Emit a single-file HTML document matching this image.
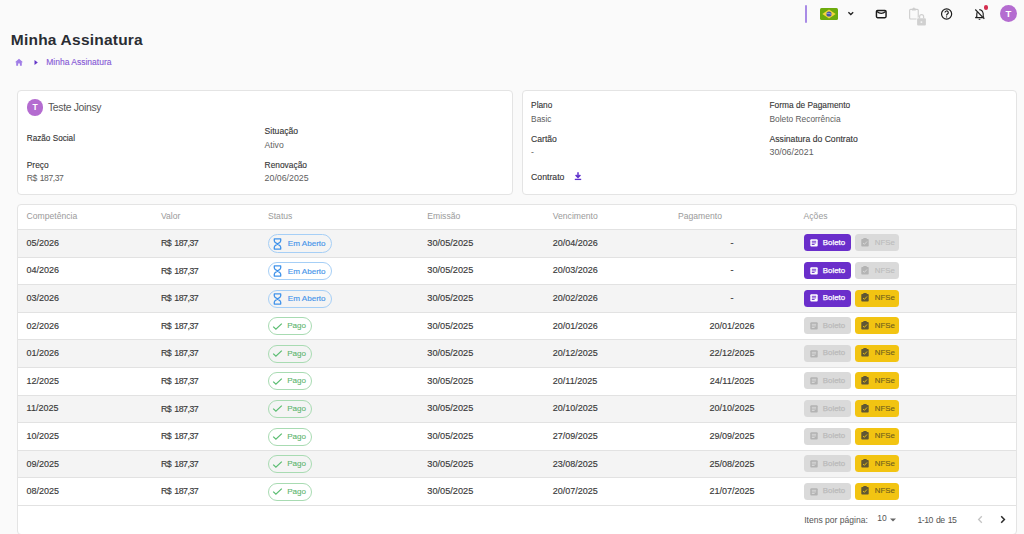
<!DOCTYPE html>
<html><head><meta charset="utf-8"><style>
html,body{margin:0;padding:0;width:1024px;height:534px;overflow:hidden;background:#fafafa;}
body{position:relative;font-family:"Liberation Sans", sans-serif;}
.t{position:absolute;white-space:nowrap;line-height:1;}
.b{position:absolute;}
</style></head><body>
<div class="b" style="left:805px;top:5px;width:2px;height:18px;background:#a98be6;border-radius:1px"></div>
<svg class="b" style="left:820px;top:8px" width="18" height="12" viewBox="0 0 18 12">
<rect x="0" y="0" width="18" height="12" rx="1.5" fill="#6dab0c"/>
<path d="M2.3 6 L9 1.6 L15.7 6 L9 10.4 Z" fill="#f3d53a"/>
<circle cx="9" cy="6" r="2.6" fill="#4457a8"/>
<path d="M6.6 5.4 Q9 4.9 11.4 6.3" stroke="#e8e8f0" stroke-width="0.5" fill="none"/>
</svg>
<svg class="b" style="left:846px;top:10px" width="10" height="8" viewBox="0 0 10 8">
<path d="M2.4 2.3 L4.8 4.5 L7.2 2.3" stroke="#222" stroke-width="1.35" fill="none"/>
</svg>
<svg class="b" style="left:874px;top:8px" width="14" height="12" viewBox="0 0 14 12">
<rect x="2.45" y="2.5" width="9.6" height="7.2" rx="1.1" stroke="#1c1c1c" stroke-width="1.45" fill="none"/>
<path d="M2.9 3.5 Q7.25 7.2 11.6 3.5" stroke="#1c1c1c" stroke-width="1.25" fill="none"/>
</svg>
<svg class="b" style="left:907px;top:6px" width="22" height="21" viewBox="0 0 22 21">
<rect x="2.65" y="3.35" width="8.6" height="9.6" rx="1" stroke="#cdcdcd" stroke-width="1.1" fill="none"/>
<rect x="4.9" y="2.5" width="4" height="2.1" rx="0.6" fill="#cdcdcd"/>
<circle cx="6.9" cy="2.3" r="0.9" fill="#cdcdcd"/>
<rect x="9.4" y="11.6" width="10.2" height="8.7" rx="1.5" fill="#fafafa"/>
<path d="M12.6 12.3 V10.5 A2 2 0 0 1 16.6 10.5 V12.3" stroke="#d0d0d0" stroke-width="1.25" fill="none"/>
<rect x="10.1" y="12.3" width="8.8" height="7.3" rx="1" fill="#d0d0d0"/>
<circle cx="14.4" cy="16.1" r="0.95" fill="#f6f6f6"/>
</svg>
<svg class="b" style="left:939px;top:7px" width="15" height="15" viewBox="0 0 15 15">
<circle cx="7.6" cy="7" r="5.05" stroke="#1c1c1c" stroke-width="1.2" fill="none"/>
<path d="M6.0 5.6 A1.65 1.65 0 1 1 8.3 7.1 Q7.6 7.5 7.6 8.4" stroke="#1c1c1c" stroke-width="1.15" fill="none"/>
<circle cx="7.6" cy="9.9" r="0.65" fill="#1c1c1c"/>
</svg>
<svg class="b" style="left:973px;top:8px" width="14" height="14" viewBox="0 0 14 14">
<path d="M6.3 1.6 Q9.6 2 10.2 5.6 V8.6 L11 9.6" stroke="#1c1c1c" stroke-width="1.1" fill="none"/>
<path d="M4.3 4.0 Q3.8 5 3.8 6 V8.6 L2.6 9.6 H9.8" stroke="#1c1c1c" stroke-width="1.15" fill="none" stroke-linejoin="round"/>
<path d="M5.7 11.3 H7.3" stroke="#1c1c1c" stroke-width="1"/>
<path d="M2.3 1.5 L11.3 10.9" stroke="#1c1c1c" stroke-width="1.1"/>
</svg>
<div class="b" style="left:983.9px;top:5.2px;width:4.4px;height:4.4px;background:#d42f4f;border-radius:50%"></div>
<div class="b" style="left:1000px;top:4.8px;width:17px;height:17px;background:#b46cd0;border-radius:50%"></div>
<div class="t" style="left:908.50px;width:200px;text-align:center;top:8.56px;font-size:9.5px;color:#fff;font-weight:700;letter-spacing:0px;">T</div>
<div class="t" style="left:10.80px;top:32.38px;font-size:15.5px;color:#2a2d33;font-weight:700;letter-spacing:0.22px;">Minha Assinatura</div>
<svg class="b" style="left:13.5px;top:57px" width="10" height="10" viewBox="0 0 10 10">
<path d="M5 1.8 L9 5.2 H7.8 V8.7 H5.9 V6.5 H4.1 V8.7 H2.2 V5.2 H1 Z" fill="#a07de6"/>
</svg>
<svg class="b" style="left:33px;top:59px" width="6" height="7" viewBox="0 0 6 7">
<path d="M1.5 1 L4.8 3.5 L1.5 6 Z" fill="#6436c8"/>
</svg>
<div class="t" style="left:46.25px;top:58.10px;font-size:8.5px;color:#8658d6;font-weight:400;letter-spacing:0px;-webkit-text-stroke:0.12px #8658d6">Minha Assinatura</div>
<div class="b" style="left:17px;top:90px;width:496px;height:105px;background:#fff;border:1px solid #e4e4e4;border-radius:4px;box-sizing:border-box"></div>
<div class="b" style="left:522px;top:90px;width:495px;height:105px;background:#fff;border:1px solid #e4e4e4;border-radius:4px;box-sizing:border-box"></div>
<div class="b" style="left:26.75px;top:99.25px;width:16.5px;height:16.5px;background:#b46cd0;border-radius:50%"></div>
<div class="t" style="left:-65.00px;width:200px;text-align:center;top:103.30px;font-size:8.5px;color:#fff;font-weight:700;letter-spacing:0px;">T</div>
<div class="t" style="left:48.00px;top:103.40px;font-size:10.4px;color:#555;font-weight:400;letter-spacing:-0.33px;">Teste Joinsy</div>
<div class="t" style="left:26.75px;top:135.16px;font-size:8.2px;color:#363636;font-weight:400;letter-spacing:0px;-webkit-text-stroke:0.12px #363636">Razão Social</div>
<div class="t" style="left:26.75px;top:160.89px;font-size:8.4px;color:#363636;font-weight:400;letter-spacing:0px;-webkit-text-stroke:0.12px #363636">Preço</div>
<div class="t" style="left:26.75px;top:173.97px;font-size:8.6px;color:#5e5e5e;font-weight:400;letter-spacing:-0.45px;word-spacing:1px">R$ 187,37</div>
<div class="t" style="left:264.60px;top:126.92px;font-size:8.6px;color:#363636;font-weight:400;letter-spacing:0px;-webkit-text-stroke:0.12px #363636">Situação</div>
<div class="t" style="left:264.60px;top:140.62px;font-size:8.6px;color:#5e5e5e;font-weight:400;letter-spacing:0px;">Ativo</div>
<div class="t" style="left:264.60px;top:161.29px;font-size:8.4px;color:#363636;font-weight:400;letter-spacing:0px;-webkit-text-stroke:0.12px #363636">Renovação</div>
<div class="t" style="left:264.60px;top:174.05px;font-size:8.8px;color:#5e5e5e;font-weight:400;letter-spacing:0px;">20/06/2025</div>
<div class="t" style="left:531.10px;top:101.17px;font-size:8.3px;color:#363636;font-weight:400;letter-spacing:0px;-webkit-text-stroke:0.12px #363636">Plano</div>
<div class="t" style="left:531.10px;top:114.87px;font-size:8.3px;color:#5e5e5e;font-weight:400;letter-spacing:0px;">Basic</div>
<div class="t" style="left:531.10px;top:135.22px;font-size:8.6px;color:#363636;font-weight:400;letter-spacing:0px;-webkit-text-stroke:0.12px #363636">Cartão</div>
<div class="t" style="left:531.10px;top:148.22px;font-size:8.6px;color:#5e5e5e;font-weight:400;letter-spacing:0px;">-</div>
<div class="t" style="left:531.10px;top:172.64px;font-size:8.7px;color:#363636;font-weight:400;letter-spacing:0px;-webkit-text-stroke:0.12px #363636">Contrato</div>
<svg class="b" style="left:573px;top:171px" width="10" height="10" viewBox="0 0 10 10">
<path d="M5 1.2 V6.2 M2.6 4 L5 6.4 L7.4 4" stroke="#5e2fcc" stroke-width="1.5" fill="none"/>
<path d="M1.8 8.4 H8.2" stroke="#5e2fcc" stroke-width="1.3"/>
</svg>
<div class="t" style="left:769.50px;top:101.13px;font-size:8.35px;color:#363636;font-weight:400;letter-spacing:0px;-webkit-text-stroke:0.12px #363636">Forma de Pagamento</div>
<div class="t" style="left:769.50px;top:114.51px;font-size:8.37px;color:#5e5e5e;font-weight:400;letter-spacing:0px;">Boleto Recorrência</div>
<div class="t" style="left:769.50px;top:134.88px;font-size:8.65px;color:#363636;font-weight:400;letter-spacing:0px;-webkit-text-stroke:0.12px #363636">Assinatura do Contrato</div>
<div class="t" style="left:769.50px;top:148.45px;font-size:8.8px;color:#5e5e5e;font-weight:400;letter-spacing:0px;">30/06/2021</div>
<div class="b" style="left:17px;top:204px;width:1000px;height:331px;background:#fff;border:1px solid #e4e4e4;border-radius:4px;box-sizing:border-box;overflow:hidden"></div>
<div class="t" style="left:26.60px;top:211.92px;font-size:8.6px;color:#9a9a9a;font-weight:400;letter-spacing:0px;">Competência</div>
<div class="t" style="left:161.00px;top:211.92px;font-size:8.6px;color:#9a9a9a;font-weight:400;letter-spacing:0px;">Valor</div>
<div class="t" style="left:268.00px;top:211.92px;font-size:8.6px;color:#9a9a9a;font-weight:400;letter-spacing:0px;">Status</div>
<div class="t" style="left:427.30px;top:211.92px;font-size:8.6px;color:#9a9a9a;font-weight:400;letter-spacing:0px;">Emissão</div>
<div class="t" style="left:552.80px;top:211.92px;font-size:8.6px;color:#9a9a9a;font-weight:400;letter-spacing:0px;">Vencimento</div>
<div class="t" style="left:678.00px;top:211.92px;font-size:8.6px;color:#9a9a9a;font-weight:400;letter-spacing:0px;">Pagamento</div>
<div class="t" style="left:803.60px;top:211.92px;font-size:8.6px;color:#9a9a9a;font-weight:400;letter-spacing:0px;">Ações</div>
<div class="b" style="left:18px;top:229px;width:998px;height:1px;background:#e2e2e2"></div>
<div class="b" style="left:18px;top:230px;width:998px;height:27px;background:#f4f4f4"></div>
<div class="b" style="left:18px;top:257px;width:998px;height:1px;background:#e2e2e2"></div>
<div class="t" style="left:26.60px;top:238.88px;font-size:9px;color:#3a3a3a;font-weight:400;letter-spacing:0px;-webkit-text-stroke:0.15px #3a3a3a">05/2026</div>
<div class="t" style="left:161.00px;top:239.05px;font-size:8.8px;color:#3a3a3a;font-weight:400;letter-spacing:-0.48px;-webkit-text-stroke:0.15px #3a3a3a;word-spacing:1px">R$ 187,37</div>
<div class="t" style="left:427.30px;top:238.71px;font-size:9.2px;color:#3a3a3a;font-weight:400;letter-spacing:0px;-webkit-text-stroke:0.15px #3a3a3a">30/05/2025</div>
<div class="t" style="left:552.80px;top:238.88px;font-size:9px;color:#3a3a3a;font-weight:400;letter-spacing:0px;-webkit-text-stroke:0.15px #3a3a3a">20/04/2026</div>
<div class="t" style="left:632.00px;width:200px;text-align:center;top:238.88px;font-size:9px;color:#3a3a3a;font-weight:400;letter-spacing:0px;-webkit-text-stroke:0.15px #3a3a3a">-</div>
<div class="b" style="left:268px;top:234.3px;width:64px;height:18.4px;border:1.2px solid #a6cff6;border-radius:10px;box-sizing:border-box"></div>
<svg class="b" style="left:273px;top:237.80px" width="9" height="12" viewBox="0 0 9 12">
<path d="M1.3 0.9 H7.7 V2.9 Q7.7 4.3 4.5 5.9 Q1.3 4.3 1.3 2.9 Z M1.3 11.1 H7.7 V9.1 Q7.7 7.7 4.5 6.1 Q1.3 7.7 1.3 9.1 Z" stroke="#3f92ea" stroke-width="1.3" fill="none" stroke-linejoin="round"/>
</svg>
<div class="t" style="left:287.80px;top:240.04px;font-size:8.1px;color:#4795ea;font-weight:400;letter-spacing:0px;-webkit-text-stroke:0.15px #4795ea">Em Aberto</div>
<div class="b" style="left:803.6px;top:234.3px;width:47px;height:17px;background:#6a2ecb;border-radius:3.5px"></div>
<svg class="b" style="left:809.5px;top:239.20px" width="8" height="8" viewBox="0 0 8 8">
<rect x="0.3" y="0.3" width="7.4" height="7.2" rx="1" fill="#ffffff"/>
<path d="M1.8 2.3 H6.2 M1.8 3.9 H6.2 M1.8 5.5 H4.6" stroke="#6a2ecb" stroke-width="0.9"/>
</svg>
<div class="t" style="left:822.80px;top:238.91px;font-size:7.9px;color:#ffffff;font-weight:400;letter-spacing:0px;-webkit-text-stroke:0.25px #ffffff">Boleto</div>
<div class="b" style="left:855px;top:234.3px;width:44px;height:17px;background:#dadada;border-radius:3.5px"></div>
<svg class="b" style="left:860.6px;top:238.00px" width="8" height="9" viewBox="0 0 8 9">
<rect x="0.3" y="1" width="7.4" height="7.6" rx="0.8" fill="#b3b3b3"/>
<rect x="2.3" y="0.1" width="3.4" height="1.8" rx="0.5" fill="#b3b3b3"/>
<path d="M2 5 L3.4 6.3 L6 3.5" stroke="#dadada" stroke-width="0.9" fill="none"/>
</svg>
<div class="t" style="left:874.80px;top:239.00px;font-size:7.8px;color:#bcbcbc;font-weight:400;letter-spacing:0px;-webkit-text-stroke:0.15px #bcbcbc">NFSe</div>
<div class="b" style="left:18px;top:284px;width:998px;height:1px;background:#e2e2e2"></div>
<div class="t" style="left:26.60px;top:266.48px;font-size:9px;color:#3a3a3a;font-weight:400;letter-spacing:0px;-webkit-text-stroke:0.15px #3a3a3a">04/2026</div>
<div class="t" style="left:161.00px;top:266.65px;font-size:8.8px;color:#3a3a3a;font-weight:400;letter-spacing:-0.48px;-webkit-text-stroke:0.15px #3a3a3a;word-spacing:1px">R$ 187,37</div>
<div class="t" style="left:427.30px;top:266.31px;font-size:9.2px;color:#3a3a3a;font-weight:400;letter-spacing:0px;-webkit-text-stroke:0.15px #3a3a3a">30/05/2025</div>
<div class="t" style="left:552.80px;top:266.48px;font-size:9px;color:#3a3a3a;font-weight:400;letter-spacing:0px;-webkit-text-stroke:0.15px #3a3a3a">20/03/2026</div>
<div class="t" style="left:632.00px;width:200px;text-align:center;top:266.48px;font-size:9px;color:#3a3a3a;font-weight:400;letter-spacing:0px;-webkit-text-stroke:0.15px #3a3a3a">-</div>
<div class="b" style="left:268px;top:261.90000000000003px;width:64px;height:18.4px;border:1.2px solid #a6cff6;border-radius:10px;box-sizing:border-box"></div>
<svg class="b" style="left:273px;top:265.40px" width="9" height="12" viewBox="0 0 9 12">
<path d="M1.3 0.9 H7.7 V2.9 Q7.7 4.3 4.5 5.9 Q1.3 4.3 1.3 2.9 Z M1.3 11.1 H7.7 V9.1 Q7.7 7.7 4.5 6.1 Q1.3 7.7 1.3 9.1 Z" stroke="#3f92ea" stroke-width="1.3" fill="none" stroke-linejoin="round"/>
</svg>
<div class="t" style="left:287.80px;top:267.64px;font-size:8.1px;color:#4795ea;font-weight:400;letter-spacing:0px;-webkit-text-stroke:0.15px #4795ea">Em Aberto</div>
<div class="b" style="left:803.6px;top:261.90000000000003px;width:47px;height:17px;background:#6a2ecb;border-radius:3.5px"></div>
<svg class="b" style="left:809.5px;top:266.80px" width="8" height="8" viewBox="0 0 8 8">
<rect x="0.3" y="0.3" width="7.4" height="7.2" rx="1" fill="#ffffff"/>
<path d="M1.8 2.3 H6.2 M1.8 3.9 H6.2 M1.8 5.5 H4.6" stroke="#6a2ecb" stroke-width="0.9"/>
</svg>
<div class="t" style="left:822.80px;top:266.51px;font-size:7.9px;color:#ffffff;font-weight:400;letter-spacing:0px;-webkit-text-stroke:0.25px #ffffff">Boleto</div>
<div class="b" style="left:855px;top:261.90000000000003px;width:44px;height:17px;background:#dadada;border-radius:3.5px"></div>
<svg class="b" style="left:860.6px;top:265.60px" width="8" height="9" viewBox="0 0 8 9">
<rect x="0.3" y="1" width="7.4" height="7.6" rx="0.8" fill="#b3b3b3"/>
<rect x="2.3" y="0.1" width="3.4" height="1.8" rx="0.5" fill="#b3b3b3"/>
<path d="M2 5 L3.4 6.3 L6 3.5" stroke="#dadada" stroke-width="0.9" fill="none"/>
</svg>
<div class="t" style="left:874.80px;top:266.60px;font-size:7.8px;color:#bcbcbc;font-weight:400;letter-spacing:0px;-webkit-text-stroke:0.15px #bcbcbc">NFSe</div>
<div class="b" style="left:18px;top:285px;width:998px;height:27px;background:#f4f4f4"></div>
<div class="b" style="left:18px;top:312px;width:998px;height:1px;background:#e2e2e2"></div>
<div class="t" style="left:26.60px;top:294.08px;font-size:9px;color:#3a3a3a;font-weight:400;letter-spacing:0px;-webkit-text-stroke:0.15px #3a3a3a">03/2026</div>
<div class="t" style="left:161.00px;top:294.25px;font-size:8.8px;color:#3a3a3a;font-weight:400;letter-spacing:-0.48px;-webkit-text-stroke:0.15px #3a3a3a;word-spacing:1px">R$ 187,37</div>
<div class="t" style="left:427.30px;top:293.91px;font-size:9.2px;color:#3a3a3a;font-weight:400;letter-spacing:0px;-webkit-text-stroke:0.15px #3a3a3a">30/05/2025</div>
<div class="t" style="left:552.80px;top:294.08px;font-size:9px;color:#3a3a3a;font-weight:400;letter-spacing:0px;-webkit-text-stroke:0.15px #3a3a3a">20/02/2026</div>
<div class="t" style="left:632.00px;width:200px;text-align:center;top:294.08px;font-size:9px;color:#3a3a3a;font-weight:400;letter-spacing:0px;-webkit-text-stroke:0.15px #3a3a3a">-</div>
<div class="b" style="left:268px;top:289.5px;width:64px;height:18.4px;border:1.2px solid #a6cff6;border-radius:10px;box-sizing:border-box"></div>
<svg class="b" style="left:273px;top:293.00px" width="9" height="12" viewBox="0 0 9 12">
<path d="M1.3 0.9 H7.7 V2.9 Q7.7 4.3 4.5 5.9 Q1.3 4.3 1.3 2.9 Z M1.3 11.1 H7.7 V9.1 Q7.7 7.7 4.5 6.1 Q1.3 7.7 1.3 9.1 Z" stroke="#3f92ea" stroke-width="1.3" fill="none" stroke-linejoin="round"/>
</svg>
<div class="t" style="left:287.80px;top:295.24px;font-size:8.1px;color:#4795ea;font-weight:400;letter-spacing:0px;-webkit-text-stroke:0.15px #4795ea">Em Aberto</div>
<div class="b" style="left:803.6px;top:289.5px;width:47px;height:17px;background:#6a2ecb;border-radius:3.5px"></div>
<svg class="b" style="left:809.5px;top:294.40px" width="8" height="8" viewBox="0 0 8 8">
<rect x="0.3" y="0.3" width="7.4" height="7.2" rx="1" fill="#ffffff"/>
<path d="M1.8 2.3 H6.2 M1.8 3.9 H6.2 M1.8 5.5 H4.6" stroke="#6a2ecb" stroke-width="0.9"/>
</svg>
<div class="t" style="left:822.80px;top:294.11px;font-size:7.9px;color:#ffffff;font-weight:400;letter-spacing:0px;-webkit-text-stroke:0.25px #ffffff">Boleto</div>
<div class="b" style="left:855px;top:289.5px;width:44px;height:17px;background:#f2c412;border-radius:3.5px"></div>
<svg class="b" style="left:860.6px;top:293.20px" width="8" height="9" viewBox="0 0 8 9">
<rect x="0.3" y="1" width="7.4" height="7.6" rx="0.8" fill="#5f5634"/>
<rect x="2.3" y="0.1" width="3.4" height="1.8" rx="0.5" fill="#5f5634"/>
<path d="M2 5 L3.4 6.3 L6 3.5" stroke="#f2c412" stroke-width="0.9" fill="none"/>
</svg>
<div class="t" style="left:874.80px;top:294.20px;font-size:7.8px;color:#73611f;font-weight:400;letter-spacing:0px;-webkit-text-stroke:0.15px #73611f">NFSe</div>
<div class="b" style="left:18px;top:339px;width:998px;height:1px;background:#e2e2e2"></div>
<div class="t" style="left:26.60px;top:321.68px;font-size:9px;color:#3a3a3a;font-weight:400;letter-spacing:0px;-webkit-text-stroke:0.15px #3a3a3a">02/2026</div>
<div class="t" style="left:161.00px;top:321.85px;font-size:8.8px;color:#3a3a3a;font-weight:400;letter-spacing:-0.48px;-webkit-text-stroke:0.15px #3a3a3a;word-spacing:1px">R$ 187,37</div>
<div class="t" style="left:427.30px;top:321.51px;font-size:9.2px;color:#3a3a3a;font-weight:400;letter-spacing:0px;-webkit-text-stroke:0.15px #3a3a3a">30/05/2025</div>
<div class="t" style="left:552.80px;top:321.68px;font-size:9px;color:#3a3a3a;font-weight:400;letter-spacing:0px;-webkit-text-stroke:0.15px #3a3a3a">20/01/2026</div>
<div class="t" style="left:632.00px;width:200px;text-align:center;top:321.68px;font-size:9px;color:#3a3a3a;font-weight:400;letter-spacing:0px;-webkit-text-stroke:0.15px #3a3a3a">20/01/2026</div>
<div class="b" style="left:268px;top:317.1px;width:44px;height:18px;border:1.2px solid #a8dbb2;border-radius:10px;box-sizing:border-box"></div>
<svg class="b" style="left:272px;top:322.50px" width="11" height="9" viewBox="0 0 11 9">
<path d="M1.2 3.6 L3.9 6.2 L9.8 0.6" stroke="#5bbd72" stroke-width="1.25" fill="none"/>
</svg>
<div class="t" style="left:287.20px;top:322.14px;font-size:8.1px;color:#5db56e;font-weight:400;letter-spacing:0px;-webkit-text-stroke:0.1px #5db56e">Pago</div>
<div class="b" style="left:803.6px;top:317.1px;width:47px;height:17px;background:#dadada;border-radius:3.5px"></div>
<svg class="b" style="left:809.5px;top:322.00px" width="8" height="8" viewBox="0 0 8 8">
<rect x="0.3" y="0.3" width="7.4" height="7.2" rx="1" fill="#b3b3b3"/>
<path d="M1.8 2.3 H6.2 M1.8 3.9 H6.2 M1.8 5.5 H4.6" stroke="#dadada" stroke-width="0.9"/>
</svg>
<div class="t" style="left:822.80px;top:321.71px;font-size:7.9px;color:#bbbbbb;font-weight:400;letter-spacing:0px;-webkit-text-stroke:0.25px #bbbbbb">Boleto</div>
<div class="b" style="left:855px;top:317.1px;width:44px;height:17px;background:#f2c412;border-radius:3.5px"></div>
<svg class="b" style="left:860.6px;top:320.80px" width="8" height="9" viewBox="0 0 8 9">
<rect x="0.3" y="1" width="7.4" height="7.6" rx="0.8" fill="#5f5634"/>
<rect x="2.3" y="0.1" width="3.4" height="1.8" rx="0.5" fill="#5f5634"/>
<path d="M2 5 L3.4 6.3 L6 3.5" stroke="#f2c412" stroke-width="0.9" fill="none"/>
</svg>
<div class="t" style="left:874.80px;top:321.80px;font-size:7.8px;color:#73611f;font-weight:400;letter-spacing:0px;-webkit-text-stroke:0.15px #73611f">NFSe</div>
<div class="b" style="left:18px;top:340px;width:998px;height:27px;background:#f4f4f4"></div>
<div class="b" style="left:18px;top:367px;width:998px;height:1px;background:#e2e2e2"></div>
<div class="t" style="left:26.60px;top:349.28px;font-size:9px;color:#3a3a3a;font-weight:400;letter-spacing:0px;-webkit-text-stroke:0.15px #3a3a3a">01/2026</div>
<div class="t" style="left:161.00px;top:349.45px;font-size:8.8px;color:#3a3a3a;font-weight:400;letter-spacing:-0.48px;-webkit-text-stroke:0.15px #3a3a3a;word-spacing:1px">R$ 187,37</div>
<div class="t" style="left:427.30px;top:349.11px;font-size:9.2px;color:#3a3a3a;font-weight:400;letter-spacing:0px;-webkit-text-stroke:0.15px #3a3a3a">30/05/2025</div>
<div class="t" style="left:552.80px;top:349.28px;font-size:9px;color:#3a3a3a;font-weight:400;letter-spacing:0px;-webkit-text-stroke:0.15px #3a3a3a">20/12/2025</div>
<div class="t" style="left:632.00px;width:200px;text-align:center;top:349.28px;font-size:9px;color:#3a3a3a;font-weight:400;letter-spacing:0px;-webkit-text-stroke:0.15px #3a3a3a">22/12/2025</div>
<div class="b" style="left:268px;top:344.7px;width:44px;height:18px;border:1.2px solid #a8dbb2;border-radius:10px;box-sizing:border-box"></div>
<svg class="b" style="left:272px;top:350.10px" width="11" height="9" viewBox="0 0 11 9">
<path d="M1.2 3.6 L3.9 6.2 L9.8 0.6" stroke="#5bbd72" stroke-width="1.25" fill="none"/>
</svg>
<div class="t" style="left:287.20px;top:349.74px;font-size:8.1px;color:#5db56e;font-weight:400;letter-spacing:0px;-webkit-text-stroke:0.1px #5db56e">Pago</div>
<div class="b" style="left:803.6px;top:344.7px;width:47px;height:17px;background:#dadada;border-radius:3.5px"></div>
<svg class="b" style="left:809.5px;top:349.60px" width="8" height="8" viewBox="0 0 8 8">
<rect x="0.3" y="0.3" width="7.4" height="7.2" rx="1" fill="#b3b3b3"/>
<path d="M1.8 2.3 H6.2 M1.8 3.9 H6.2 M1.8 5.5 H4.6" stroke="#dadada" stroke-width="0.9"/>
</svg>
<div class="t" style="left:822.80px;top:349.31px;font-size:7.9px;color:#bbbbbb;font-weight:400;letter-spacing:0px;-webkit-text-stroke:0.25px #bbbbbb">Boleto</div>
<div class="b" style="left:855px;top:344.7px;width:44px;height:17px;background:#f2c412;border-radius:3.5px"></div>
<svg class="b" style="left:860.6px;top:348.40px" width="8" height="9" viewBox="0 0 8 9">
<rect x="0.3" y="1" width="7.4" height="7.6" rx="0.8" fill="#5f5634"/>
<rect x="2.3" y="0.1" width="3.4" height="1.8" rx="0.5" fill="#5f5634"/>
<path d="M2 5 L3.4 6.3 L6 3.5" stroke="#f2c412" stroke-width="0.9" fill="none"/>
</svg>
<div class="t" style="left:874.80px;top:349.40px;font-size:7.8px;color:#73611f;font-weight:400;letter-spacing:0px;-webkit-text-stroke:0.15px #73611f">NFSe</div>
<div class="b" style="left:18px;top:395px;width:998px;height:1px;background:#e2e2e2"></div>
<div class="t" style="left:26.60px;top:376.88px;font-size:9px;color:#3a3a3a;font-weight:400;letter-spacing:0px;-webkit-text-stroke:0.15px #3a3a3a">12/2025</div>
<div class="t" style="left:161.00px;top:377.05px;font-size:8.8px;color:#3a3a3a;font-weight:400;letter-spacing:-0.48px;-webkit-text-stroke:0.15px #3a3a3a;word-spacing:1px">R$ 187,37</div>
<div class="t" style="left:427.30px;top:376.71px;font-size:9.2px;color:#3a3a3a;font-weight:400;letter-spacing:0px;-webkit-text-stroke:0.15px #3a3a3a">30/05/2025</div>
<div class="t" style="left:552.80px;top:376.88px;font-size:9px;color:#3a3a3a;font-weight:400;letter-spacing:0px;-webkit-text-stroke:0.15px #3a3a3a">20/11/2025</div>
<div class="t" style="left:632.00px;width:200px;text-align:center;top:376.88px;font-size:9px;color:#3a3a3a;font-weight:400;letter-spacing:0px;-webkit-text-stroke:0.15px #3a3a3a">24/11/2025</div>
<div class="b" style="left:268px;top:372.3px;width:44px;height:18px;border:1.2px solid #a8dbb2;border-radius:10px;box-sizing:border-box"></div>
<svg class="b" style="left:272px;top:377.70px" width="11" height="9" viewBox="0 0 11 9">
<path d="M1.2 3.6 L3.9 6.2 L9.8 0.6" stroke="#5bbd72" stroke-width="1.25" fill="none"/>
</svg>
<div class="t" style="left:287.20px;top:377.34px;font-size:8.1px;color:#5db56e;font-weight:400;letter-spacing:0px;-webkit-text-stroke:0.1px #5db56e">Pago</div>
<div class="b" style="left:803.6px;top:372.3px;width:47px;height:17px;background:#dadada;border-radius:3.5px"></div>
<svg class="b" style="left:809.5px;top:377.20px" width="8" height="8" viewBox="0 0 8 8">
<rect x="0.3" y="0.3" width="7.4" height="7.2" rx="1" fill="#b3b3b3"/>
<path d="M1.8 2.3 H6.2 M1.8 3.9 H6.2 M1.8 5.5 H4.6" stroke="#dadada" stroke-width="0.9"/>
</svg>
<div class="t" style="left:822.80px;top:376.91px;font-size:7.9px;color:#bbbbbb;font-weight:400;letter-spacing:0px;-webkit-text-stroke:0.25px #bbbbbb">Boleto</div>
<div class="b" style="left:855px;top:372.3px;width:44px;height:17px;background:#f2c412;border-radius:3.5px"></div>
<svg class="b" style="left:860.6px;top:376.00px" width="8" height="9" viewBox="0 0 8 9">
<rect x="0.3" y="1" width="7.4" height="7.6" rx="0.8" fill="#5f5634"/>
<rect x="2.3" y="0.1" width="3.4" height="1.8" rx="0.5" fill="#5f5634"/>
<path d="M2 5 L3.4 6.3 L6 3.5" stroke="#f2c412" stroke-width="0.9" fill="none"/>
</svg>
<div class="t" style="left:874.80px;top:377.00px;font-size:7.8px;color:#73611f;font-weight:400;letter-spacing:0px;-webkit-text-stroke:0.15px #73611f">NFSe</div>
<div class="b" style="left:18px;top:396px;width:998px;height:26px;background:#f4f4f4"></div>
<div class="b" style="left:18px;top:422px;width:998px;height:1px;background:#e2e2e2"></div>
<div class="t" style="left:26.60px;top:404.48px;font-size:9px;color:#3a3a3a;font-weight:400;letter-spacing:0px;-webkit-text-stroke:0.15px #3a3a3a">11/2025</div>
<div class="t" style="left:161.00px;top:404.65px;font-size:8.8px;color:#3a3a3a;font-weight:400;letter-spacing:-0.48px;-webkit-text-stroke:0.15px #3a3a3a;word-spacing:1px">R$ 187,37</div>
<div class="t" style="left:427.30px;top:404.31px;font-size:9.2px;color:#3a3a3a;font-weight:400;letter-spacing:0px;-webkit-text-stroke:0.15px #3a3a3a">30/05/2025</div>
<div class="t" style="left:552.80px;top:404.48px;font-size:9px;color:#3a3a3a;font-weight:400;letter-spacing:0px;-webkit-text-stroke:0.15px #3a3a3a">20/10/2025</div>
<div class="t" style="left:632.00px;width:200px;text-align:center;top:404.48px;font-size:9px;color:#3a3a3a;font-weight:400;letter-spacing:0px;-webkit-text-stroke:0.15px #3a3a3a">20/10/2025</div>
<div class="b" style="left:268px;top:399.90000000000003px;width:44px;height:18px;border:1.2px solid #a8dbb2;border-radius:10px;box-sizing:border-box"></div>
<svg class="b" style="left:272px;top:405.30px" width="11" height="9" viewBox="0 0 11 9">
<path d="M1.2 3.6 L3.9 6.2 L9.8 0.6" stroke="#5bbd72" stroke-width="1.25" fill="none"/>
</svg>
<div class="t" style="left:287.20px;top:404.94px;font-size:8.1px;color:#5db56e;font-weight:400;letter-spacing:0px;-webkit-text-stroke:0.1px #5db56e">Pago</div>
<div class="b" style="left:803.6px;top:399.90000000000003px;width:47px;height:17px;background:#dadada;border-radius:3.5px"></div>
<svg class="b" style="left:809.5px;top:404.80px" width="8" height="8" viewBox="0 0 8 8">
<rect x="0.3" y="0.3" width="7.4" height="7.2" rx="1" fill="#b3b3b3"/>
<path d="M1.8 2.3 H6.2 M1.8 3.9 H6.2 M1.8 5.5 H4.6" stroke="#dadada" stroke-width="0.9"/>
</svg>
<div class="t" style="left:822.80px;top:404.51px;font-size:7.9px;color:#bbbbbb;font-weight:400;letter-spacing:0px;-webkit-text-stroke:0.25px #bbbbbb">Boleto</div>
<div class="b" style="left:855px;top:399.90000000000003px;width:44px;height:17px;background:#f2c412;border-radius:3.5px"></div>
<svg class="b" style="left:860.6px;top:403.60px" width="8" height="9" viewBox="0 0 8 9">
<rect x="0.3" y="1" width="7.4" height="7.6" rx="0.8" fill="#5f5634"/>
<rect x="2.3" y="0.1" width="3.4" height="1.8" rx="0.5" fill="#5f5634"/>
<path d="M2 5 L3.4 6.3 L6 3.5" stroke="#f2c412" stroke-width="0.9" fill="none"/>
</svg>
<div class="t" style="left:874.80px;top:404.60px;font-size:7.8px;color:#73611f;font-weight:400;letter-spacing:0px;-webkit-text-stroke:0.15px #73611f">NFSe</div>
<div class="b" style="left:18px;top:450px;width:998px;height:1px;background:#e2e2e2"></div>
<div class="t" style="left:26.60px;top:432.08px;font-size:9px;color:#3a3a3a;font-weight:400;letter-spacing:0px;-webkit-text-stroke:0.15px #3a3a3a">10/2025</div>
<div class="t" style="left:161.00px;top:432.25px;font-size:8.8px;color:#3a3a3a;font-weight:400;letter-spacing:-0.48px;-webkit-text-stroke:0.15px #3a3a3a;word-spacing:1px">R$ 187,37</div>
<div class="t" style="left:427.30px;top:431.91px;font-size:9.2px;color:#3a3a3a;font-weight:400;letter-spacing:0px;-webkit-text-stroke:0.15px #3a3a3a">30/05/2025</div>
<div class="t" style="left:552.80px;top:432.08px;font-size:9px;color:#3a3a3a;font-weight:400;letter-spacing:0px;-webkit-text-stroke:0.15px #3a3a3a">27/09/2025</div>
<div class="t" style="left:632.00px;width:200px;text-align:center;top:432.08px;font-size:9px;color:#3a3a3a;font-weight:400;letter-spacing:0px;-webkit-text-stroke:0.15px #3a3a3a">29/09/2025</div>
<div class="b" style="left:268px;top:427.50000000000006px;width:44px;height:18px;border:1.2px solid #a8dbb2;border-radius:10px;box-sizing:border-box"></div>
<svg class="b" style="left:272px;top:432.90px" width="11" height="9" viewBox="0 0 11 9">
<path d="M1.2 3.6 L3.9 6.2 L9.8 0.6" stroke="#5bbd72" stroke-width="1.25" fill="none"/>
</svg>
<div class="t" style="left:287.20px;top:432.54px;font-size:8.1px;color:#5db56e;font-weight:400;letter-spacing:0px;-webkit-text-stroke:0.1px #5db56e">Pago</div>
<div class="b" style="left:803.6px;top:427.50000000000006px;width:47px;height:17px;background:#dadada;border-radius:3.5px"></div>
<svg class="b" style="left:809.5px;top:432.40px" width="8" height="8" viewBox="0 0 8 8">
<rect x="0.3" y="0.3" width="7.4" height="7.2" rx="1" fill="#b3b3b3"/>
<path d="M1.8 2.3 H6.2 M1.8 3.9 H6.2 M1.8 5.5 H4.6" stroke="#dadada" stroke-width="0.9"/>
</svg>
<div class="t" style="left:822.80px;top:432.11px;font-size:7.9px;color:#bbbbbb;font-weight:400;letter-spacing:0px;-webkit-text-stroke:0.25px #bbbbbb">Boleto</div>
<div class="b" style="left:855px;top:427.50000000000006px;width:44px;height:17px;background:#f2c412;border-radius:3.5px"></div>
<svg class="b" style="left:860.6px;top:431.20px" width="8" height="9" viewBox="0 0 8 9">
<rect x="0.3" y="1" width="7.4" height="7.6" rx="0.8" fill="#5f5634"/>
<rect x="2.3" y="0.1" width="3.4" height="1.8" rx="0.5" fill="#5f5634"/>
<path d="M2 5 L3.4 6.3 L6 3.5" stroke="#f2c412" stroke-width="0.9" fill="none"/>
</svg>
<div class="t" style="left:874.80px;top:432.20px;font-size:7.8px;color:#73611f;font-weight:400;letter-spacing:0px;-webkit-text-stroke:0.15px #73611f">NFSe</div>
<div class="b" style="left:18px;top:451px;width:998px;height:26px;background:#f4f4f4"></div>
<div class="b" style="left:18px;top:477px;width:998px;height:1px;background:#e2e2e2"></div>
<div class="t" style="left:26.60px;top:459.68px;font-size:9px;color:#3a3a3a;font-weight:400;letter-spacing:0px;-webkit-text-stroke:0.15px #3a3a3a">09/2025</div>
<div class="t" style="left:161.00px;top:459.85px;font-size:8.8px;color:#3a3a3a;font-weight:400;letter-spacing:-0.48px;-webkit-text-stroke:0.15px #3a3a3a;word-spacing:1px">R$ 187,37</div>
<div class="t" style="left:427.30px;top:459.51px;font-size:9.2px;color:#3a3a3a;font-weight:400;letter-spacing:0px;-webkit-text-stroke:0.15px #3a3a3a">30/05/2025</div>
<div class="t" style="left:552.80px;top:459.68px;font-size:9px;color:#3a3a3a;font-weight:400;letter-spacing:0px;-webkit-text-stroke:0.15px #3a3a3a">23/08/2025</div>
<div class="t" style="left:632.00px;width:200px;text-align:center;top:459.68px;font-size:9px;color:#3a3a3a;font-weight:400;letter-spacing:0px;-webkit-text-stroke:0.15px #3a3a3a">25/08/2025</div>
<div class="b" style="left:268px;top:455.1px;width:44px;height:18px;border:1.2px solid #a8dbb2;border-radius:10px;box-sizing:border-box"></div>
<svg class="b" style="left:272px;top:460.50px" width="11" height="9" viewBox="0 0 11 9">
<path d="M1.2 3.6 L3.9 6.2 L9.8 0.6" stroke="#5bbd72" stroke-width="1.25" fill="none"/>
</svg>
<div class="t" style="left:287.20px;top:460.14px;font-size:8.1px;color:#5db56e;font-weight:400;letter-spacing:0px;-webkit-text-stroke:0.1px #5db56e">Pago</div>
<div class="b" style="left:803.6px;top:455.1px;width:47px;height:17px;background:#dadada;border-radius:3.5px"></div>
<svg class="b" style="left:809.5px;top:460.00px" width="8" height="8" viewBox="0 0 8 8">
<rect x="0.3" y="0.3" width="7.4" height="7.2" rx="1" fill="#b3b3b3"/>
<path d="M1.8 2.3 H6.2 M1.8 3.9 H6.2 M1.8 5.5 H4.6" stroke="#dadada" stroke-width="0.9"/>
</svg>
<div class="t" style="left:822.80px;top:459.71px;font-size:7.9px;color:#bbbbbb;font-weight:400;letter-spacing:0px;-webkit-text-stroke:0.25px #bbbbbb">Boleto</div>
<div class="b" style="left:855px;top:455.1px;width:44px;height:17px;background:#f2c412;border-radius:3.5px"></div>
<svg class="b" style="left:860.6px;top:458.80px" width="8" height="9" viewBox="0 0 8 9">
<rect x="0.3" y="1" width="7.4" height="7.6" rx="0.8" fill="#5f5634"/>
<rect x="2.3" y="0.1" width="3.4" height="1.8" rx="0.5" fill="#5f5634"/>
<path d="M2 5 L3.4 6.3 L6 3.5" stroke="#f2c412" stroke-width="0.9" fill="none"/>
</svg>
<div class="t" style="left:874.80px;top:459.80px;font-size:7.8px;color:#73611f;font-weight:400;letter-spacing:0px;-webkit-text-stroke:0.15px #73611f">NFSe</div>
<div class="b" style="left:18px;top:505px;width:998px;height:1px;background:#e2e2e2"></div>
<div class="t" style="left:26.60px;top:487.28px;font-size:9px;color:#3a3a3a;font-weight:400;letter-spacing:0px;-webkit-text-stroke:0.15px #3a3a3a">08/2025</div>
<div class="t" style="left:161.00px;top:487.45px;font-size:8.8px;color:#3a3a3a;font-weight:400;letter-spacing:-0.48px;-webkit-text-stroke:0.15px #3a3a3a;word-spacing:1px">R$ 187,37</div>
<div class="t" style="left:427.30px;top:487.11px;font-size:9.2px;color:#3a3a3a;font-weight:400;letter-spacing:0px;-webkit-text-stroke:0.15px #3a3a3a">30/05/2025</div>
<div class="t" style="left:552.80px;top:487.28px;font-size:9px;color:#3a3a3a;font-weight:400;letter-spacing:0px;-webkit-text-stroke:0.15px #3a3a3a">20/07/2025</div>
<div class="t" style="left:632.00px;width:200px;text-align:center;top:487.28px;font-size:9px;color:#3a3a3a;font-weight:400;letter-spacing:0px;-webkit-text-stroke:0.15px #3a3a3a">21/07/2025</div>
<div class="b" style="left:268px;top:482.7px;width:44px;height:18px;border:1.2px solid #a8dbb2;border-radius:10px;box-sizing:border-box"></div>
<svg class="b" style="left:272px;top:488.10px" width="11" height="9" viewBox="0 0 11 9">
<path d="M1.2 3.6 L3.9 6.2 L9.8 0.6" stroke="#5bbd72" stroke-width="1.25" fill="none"/>
</svg>
<div class="t" style="left:287.20px;top:487.74px;font-size:8.1px;color:#5db56e;font-weight:400;letter-spacing:0px;-webkit-text-stroke:0.1px #5db56e">Pago</div>
<div class="b" style="left:803.6px;top:482.7px;width:47px;height:17px;background:#dadada;border-radius:3.5px"></div>
<svg class="b" style="left:809.5px;top:487.60px" width="8" height="8" viewBox="0 0 8 8">
<rect x="0.3" y="0.3" width="7.4" height="7.2" rx="1" fill="#b3b3b3"/>
<path d="M1.8 2.3 H6.2 M1.8 3.9 H6.2 M1.8 5.5 H4.6" stroke="#dadada" stroke-width="0.9"/>
</svg>
<div class="t" style="left:822.80px;top:487.31px;font-size:7.9px;color:#bbbbbb;font-weight:400;letter-spacing:0px;-webkit-text-stroke:0.25px #bbbbbb">Boleto</div>
<div class="b" style="left:855px;top:482.7px;width:44px;height:17px;background:#f2c412;border-radius:3.5px"></div>
<svg class="b" style="left:860.6px;top:486.40px" width="8" height="9" viewBox="0 0 8 9">
<rect x="0.3" y="1" width="7.4" height="7.6" rx="0.8" fill="#5f5634"/>
<rect x="2.3" y="0.1" width="3.4" height="1.8" rx="0.5" fill="#5f5634"/>
<path d="M2 5 L3.4 6.3 L6 3.5" stroke="#f2c412" stroke-width="0.9" fill="none"/>
</svg>
<div class="t" style="left:874.80px;top:487.40px;font-size:7.8px;color:#73611f;font-weight:400;letter-spacing:0px;-webkit-text-stroke:0.15px #73611f">NFSe</div>
<div class="t" style="left:804.20px;top:515.95px;font-size:8.56px;color:#555;font-weight:400;letter-spacing:0px;">Itens por página:</div>
<div class="t" style="left:877.30px;top:514.30px;font-size:8.5px;color:#555;font-weight:400;letter-spacing:0px;">10</div>
<svg class="b" style="left:889px;top:517px" width="8" height="6" viewBox="0 0 8 6">
<path d="M1 1.6 H7 L4 4.6 Z" fill="#666"/>
</svg>
<div class="t" style="left:917.50px;top:515.64px;font-size:8.7px;color:#555;font-weight:400;letter-spacing:-0.5px;word-spacing:1.2px">1-10 de 15</div>
<svg class="b" style="left:975px;top:514px" width="10" height="11" viewBox="0 0 10 11">
<path d="M6.8 2.2 L3.6 5.5 L6.8 8.8" stroke="#c4c4c4" stroke-width="1.3" fill="none"/>
</svg>
<svg class="b" style="left:998px;top:514px" width="10" height="11" viewBox="0 0 10 11">
<path d="M3.2 2.2 L6.4 5.5 L3.2 8.8" stroke="#2a2a2a" stroke-width="1.5" fill="none"/>
</svg>
</body></html>
